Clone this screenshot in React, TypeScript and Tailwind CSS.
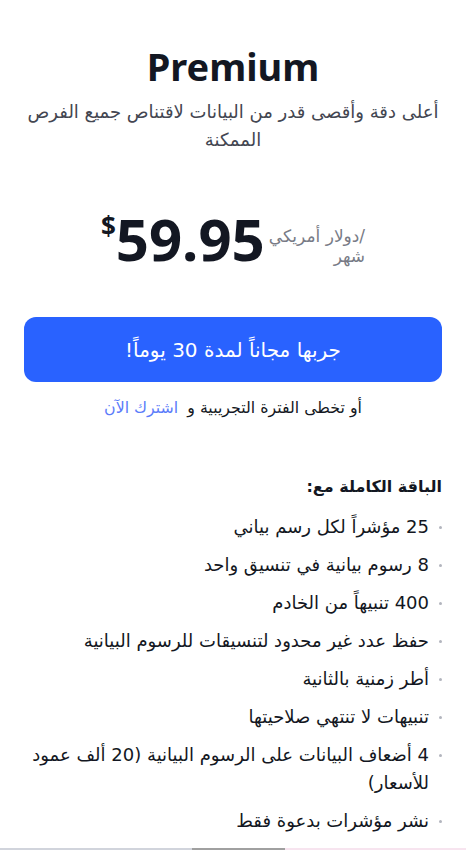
import React from "react";

const FEATURES = [
  "25 مؤشراً لكل رسم بياني",
  "8 رسوم بيانية في تنسيق واحد",
  "400 تنبيهاً من الخادم",
  "حفظ عدد غير محدود لتنسيقات للرسوم البيانية",
  "أطر زمنية بالثانية",
  "تنبيهات لا تنتهي صلاحيتها",
  "4 أضعاف البيانات على الرسوم البيانية (20 ألف عمود للأسعار)",
  "نشر مؤشرات بدعوة فقط",
];

// Latin headings use Noto Sans; Arabic copy falls to DejaVu Sans
const latin = { fontFamily: '"Noto Sans", "DejaVu Sans", sans-serif' };

export default function App() {
  return (
    <div
      dir="rtl"
      className="relative flex min-h-[850px] w-[466px] flex-col bg-white px-6 text-[#131722]"
      style={{ fontFamily: '"DejaVu Sans", sans-serif' }}
    >
      <h1
        dir="ltr"
        style={latin}
        className="mt-[40px] text-center text-[38px] font-bold leading-[52px] text-[#131722]"
      >
        Premium
      </h1>
      <p className="mt-[6px] text-center text-[18px] leading-[28px] text-[#434651]">
        أعلى دقة وأقصى قدر من البيانات لاقتناص جميع الفرص الممكنة
      </p>

      {/* Price */}
      <div dir="ltr" className="mt-[55px] flex items-start justify-center">
        <span style={latin} className="mt-[2px] text-[26px] font-bold leading-[30px]">
          $
        </span>
        <span style={latin} className="text-[58px] font-bold leading-[60px]">
          59.95
        </span>
        <span
          dir="rtl"
          className="ml-1 mt-[17px] whitespace-nowrap text-right text-[17px] leading-[20px] text-[#787b86]"
        >
          /دولار أمريكي
          <br />
          شهر
        </span>
      </div>

      <button className="mt-[48px] h-[65px] w-full rounded-[12px] bg-[#2962ff] text-[20px] text-white">
        جربها مجاناً لمدة 30 يوماً!
      </button>

      <p className="mt-[14px] text-center text-[15.8px] leading-[24px] text-[#131722]">
        أو تخطى الفترة التجريبية و{" "}
        <a className="mr-1 text-[#5b7cfa]">اشترك الآن</a>
      </p>

      <h2 className="mt-[55px] text-[16px] font-bold leading-[24px]">الباقة الكاملة مع:</h2>

      <ul className="mt-[14px] flex flex-col gap-[10px]">
        {FEATURES.map((f) => (
          <li
            key={f}
            className="flex items-start gap-[10px] text-[18px] leading-[28px] text-[#131722]"
          >
            <span className="mt-[13px] h-[3px] w-[3px] shrink-0 rounded-full bg-[#b2b5be]" />
            <span>{f}</span>
          </li>
        ))}
      </ul>

      <div className="absolute bottom-0 left-0 flex h-[2px] w-full" dir="ltr">
        <div className="w-[192px] bg-[#d1d4dc]" />
        <div className="w-[93px] bg-[#a0a0a0]" />
        <div className="flex-1 bg-[#f7e4ef]" />
      </div>
    </div>
  );
}
